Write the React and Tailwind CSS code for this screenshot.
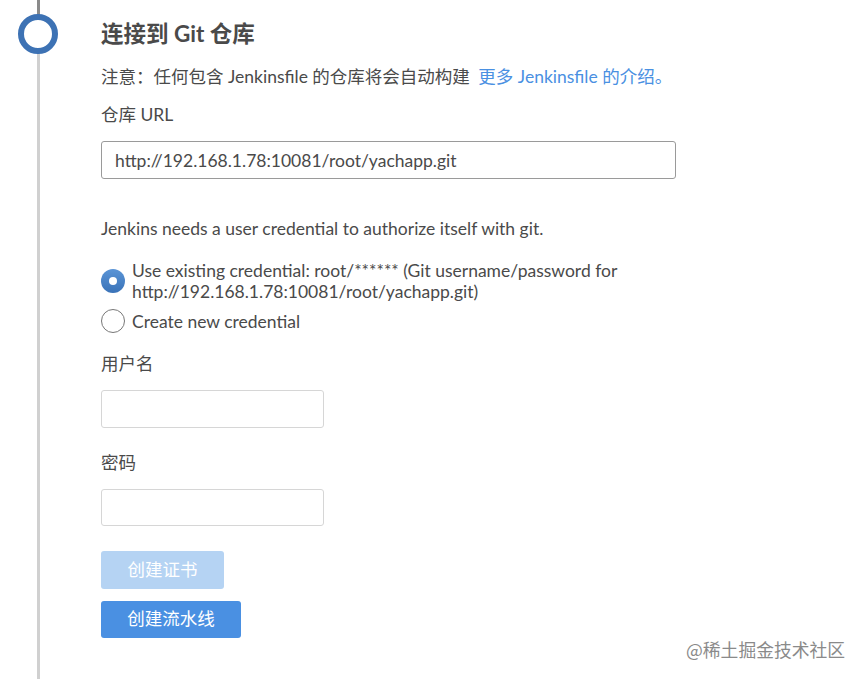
import { useState } from "react";

const font = { fontFamily: "Lato, 'Noto Sans CJK SC', sans-serif" };

const Radio = ({ checked }) =>
  checked ? (
    <span className="flex h-6 w-6 shrink-0 items-center justify-center rounded-full bg-gradient-to-b from-[#5a94d6] to-[#3a73b8]">
      <span className="h-2 w-2 rounded-full bg-white" />
    </span>
  ) : (
    <span className="h-6 w-6 shrink-0 rounded-full border border-[#777] bg-white" />
  );

export default function App() {
  const [url, setUrl] = useState("http://192.168.1.78:10081/root/yachapp.git");
  const [choice, setChoice] = useState("existing");

  return (
    <div className="relative flex h-[679px] w-[867px] bg-white text-[#4a4a4a]" style={font}>
      {/* step timeline */}
      <div className="relative w-[101px] shrink-0">
        <div className="absolute left-[37px] top-0 h-[16px] w-[3px] bg-[#8a8a8a]" />
        <div className="absolute left-[37px] top-[52px] bottom-0 w-[3px] bg-[#d0d0d0]" />
        <div className="absolute left-[18px] top-[14px] h-[40px] w-[40px] rounded-full border-[6px] border-[#3d72b4] bg-white" />
      </div>

      <div className="flex flex-col pt-[19px] text-[17.5px]">
        <h2 className="text-[22.5px] font-bold leading-[30px] text-[#4a4a4a]">连接到 Git 仓库</h2>
        <p className="mt-[16px] leading-[24px]">
          注意：任何包含 Jenkinsfile 的仓库将会自动构建{" "}
          <a className="ml-1 text-[#4a90e2]">更多 Jenkinsfile 的介绍。</a>
        </p>
        <label className="mt-[14px] leading-[24px]">仓库 URL</label>
        <input
          className="mt-[14px] h-[38px] w-[575px] rounded-[3px] border border-[#9a9a9a] px-[13px] text-[17.5px] text-[#4a4a4a] outline-none"
          style={font}
          value={url}
          onChange={(e) => setUrl(e.target.value)}
        />

        <p className="mt-[38px] leading-[24px]">
          Jenkins needs a user credential to authorize itself with git.
        </p>

        <div className="mt-[19px] flex flex-col gap-[7px]">
          <div className="flex cursor-pointer items-start gap-[7px]" onClick={() => setChoice("existing")}>
            <div className="pt-[9px]">
              <Radio checked={choice === "existing"} />
            </div>
            <span className="w-[520px] leading-[21px]">
              Use existing credential: root/****** (Git username/password for http://192.168.1.78:10081/root/yachapp.git)
            </span>
          </div>
          <div className="flex cursor-pointer items-center gap-[7px]" onClick={() => setChoice("new")}>
            <Radio checked={choice === "new"} />
            <span className="leading-[21px]">Create new credential</span>
          </div>
        </div>

        <label className="mt-[19px] leading-[24px]">用户名</label>
        <input className="mt-[14px] h-[38px] w-[223px] rounded-[3px] border border-[#d6d6d6] px-3 outline-none" />

        <label className="mt-[23px] leading-[24px]">密码</label>
        <input type="password" className="mt-[14px] h-[37px] w-[223px] rounded-[3px] border border-[#d6d6d6] px-3 outline-none" />

        <button className="mt-[25px] h-[38px] w-[123px] rounded-[3px] bg-[#b5d3f3] text-[17.5px] text-white">
          创建证书
        </button>
        <button className="mt-[12px] h-[37px] w-[140px] rounded-[3px] bg-[#4a90e2] text-[17.5px] text-white">
          创建流水线
        </button>
      </div>

      <span className="absolute left-[686px] top-[637px] text-[17.8px] leading-[24px] text-[#8a8a8a]" style={{ fontFamily: "'Noto Sans CJK SC', sans-serif" }}>
        @稀土掘金技术社区
      </span>
    </div>
  );
}
